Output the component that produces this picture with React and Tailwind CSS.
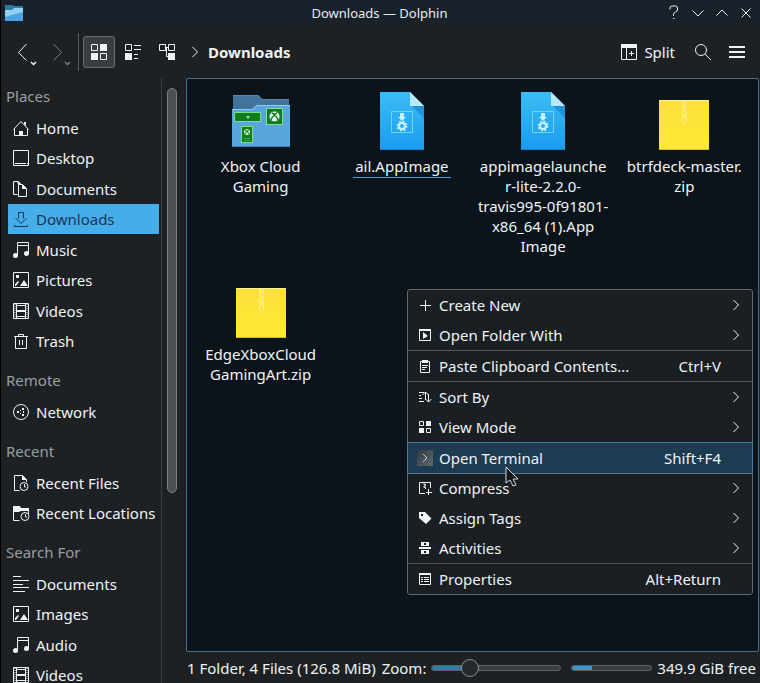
import React, { useState } from 'react';
import clsx from 'clsx';

// 16px glyphs, drawn with currentColor
const glyphs = {
  home: (
    <>
      <path d="M1.5 8.5v7h13v-7M.5 9.5L8 1.5l7.500 8" />
      <path d="M6 11h4v5H6zM11 2h2v4l-2-2z" fill="currentColor" stroke="none" />
    </>
  ),
  desktop: <path d="M.5.5h15v15H.5zM2 13.500h11M14 13.500h1" />,
  documents: (
    <>
      <path d="M4.500 13.500h-4V.5h5l2 2M5.500 3.500h4l4 4v8h-8z" />
      <path d="M9 3l5 5H9zM4 0l4 3H5z" fill="currentColor" stroke="none" />
    </>
  ),
  downloads: <path d="M5.500 7.500v-6h5v6M2.500 7L8 12.500 13.500 7M1.500 14v1.500h13V14" />,
  music: (
    <>
      <path d="M4.500 13V.5h11V11M5 3.500h10" />
      <circle cx="2.500" cy="13.500" r="2.500" fill="currentColor" stroke="none" />
      <circle cx="13.500" cy="11.500" r="2.500" fill="currentColor" stroke="none" />
    </>
  ),
  image: (
    <>
      <path d="M.5.5h15v15H.5z" />
      <path d="M3 3h3v3H3zM7 14l4-6 4 6zM2 14v-2l3-3 1 1-3 4z" fill="currentColor" stroke="none" />
    </>
  ),
  video: (
    <>
      <path d="M.5.5h15v15H.5zM3.500 0v16M12.500 0v16M4 2.500h8M4 13.500h8" />
      <path d="M4 7h8v2H4z" fill="currentColor" stroke="none" />
      <path d="M2 1v14M14 1v14" strokeDasharray="1 1" />
    </>
  ),
  trash: <path d="M1 3.500h14M2.500 3.500v12h11v-12M5.500 3V1.500h5V3M6.500 7v5M9.500 7v5" />,
  network: (
    <>
      <circle cx="8" cy="8" r="7.500" />
      <path d="M4 7h2v2H4zM9 4h2v2H9zM9 10h2v2H9zM7 6h1v1H7zM7 9h1v1H7zM10 7h1v2h-1z" fill="currentColor" stroke="none" />
    </>
  ),
  recentFile: (
    <>
      <path d="M6.500 15.500h-5V.5h8l4 4V7" />
      <path d="M9 0l5 5H9z" fill="currentColor" stroke="none" />
      <circle cx="11" cy="11.500" r="4" />
      <path d="M11.500 9v3H13" />
    </>
  ),
  recentFolder: (
    <>
      <path d="M.5 3v12.500h6M15.500 3v6" />
      <path d="M0 1h7l1 2h8v3H8L6 7H0z" fill="currentColor" stroke="none" />
      <circle cx="12" cy="11.500" r="4" />
      <path d="M12.500 9v3H14" />
    </>
  ),
  lines: <path d="M0 .5h8M0 4.500h16M0 8.500h10M0 11.500h16M0 15.500h12" />,
  grid: (
    <>
      <path d="M.5.5h6v6h-6zM9.500 9.500h6v6h-6z" />
      <path d="M9 0h7v7H9zM0 9h7v7H0z" fill="currentColor" stroke="none" />
    </>
  ),
  compact: (
    <>
      <path d="M.5.5h6v6h-6zM9 1.500h7M9 5.500h7M9 10.500h4M9 14.500h4" />
      <path d="M0 9h7v7H0z" fill="currentColor" stroke="none" />
    </>
  ),
  tree: (
    <>
      <path d="M.5.5h6v6h-6zM9.500.5h6v6h-6zM6.500 3.500h3M7.500 4v8.500H10" />
      <path d="M9 9h7v7H9z" fill="currentColor" stroke="none" />
    </>
  ),
  split: (
    <>
      <path d="M.5.5h15v15H.5zM5.500 3v12M8 9.500h5M10.500 7v5" />
      <path d="M0 0h16v4H0z" fill="currentColor" stroke="none" />
    </>
  ),
  search: (
    <>
      <circle cx="6" cy="6" r="5.500" />
      <path d="M10 10l6 6" />
    </>
  ),
  burger: <path d="M0 3h16M0 8h16M0 13h16" strokeWidth="2" />,
  help: <path d="M4 4.500V3a2 2 0 0 1 2-2h3.500a2 2 0 0 1 2 2v2c0 2-4 2-4 4.500v1.500M7 13.500h1.500" />,
  minimize: <path d="M2.500 5.500L8 11l5.500-5.500" />,
  maximize: <path d="M2.500 10.500L8 5l5.500 5.500" />,
  close: <path d="M3.500 3.500l9 9M12.500 3.500l-9 9" />,
  right: <path d="M5.500 3L10.500 8l-5 5" />,
  plus: <path d="M8.500 3v11M3 8.500h11" />,
  openWith: (
    <>
      <path d="M2.500 2.500h11v11h-11z" />
      <path d="M2 2h12v2H2zM6 5l5 4-5 3z" fill="currentColor" stroke="none" />
    </>
  ),
  paste: (
    <>
      <path d="M3.500 3.500h9v11h-9zM5 7.500h6M5 9.500h5M5 11.500h3" />
      <path d="M5 2h6v3H5z" fill="currentColor" stroke="none" />
    </>
  ),
  sort: <path d="M2 3.500h5M2 6.500h2M2 9.500h3M2 12.500h5M8.500 11V3M5.500 6l3-3 3 3M11.500 5v8M8.500 10l3 3 3-3" />,
  viewMode: (
    <>
      <path d="M2.500 2.500h4v4h-4zM9.500 9.500h4v4h-4z" />
      <path d="M9 2h5v5H9zM2 9h5v5H2z" fill="currentColor" stroke="none" />
    </>
  ),
  compress: <path d="M8 13.500H2.500v-11h11V8M7 3v1.500h1.500V6H7v1.500h1.500V9M11.500 9v6M9 12.500h6" />,
  tag: (
    <path
      fillRule="evenodd"
      d="M2 2h6l6.500 6.500L9 14 2 8zM4 4v2h2V4z"
      fill="currentColor"
      stroke="none"
    />
  ),
  activities: (
    <path
      fillRule="evenodd"
      d="M4 2h8v4H4zM7 3v2h2V3zM2 7h12v2H2zM4 10h8v4H4zM7 11v2h2v-2z"
      fill="currentColor"
      stroke="none"
    />
  ),
  properties: (
    <>
      <path d="M2.500 2.500h11v11h-11zM4 6.500h2M4 8.500h2M4 10.500h2M7 6.500h5M7 8.500h5M7 10.500h5" />
      <path d="M2 2h12v2H2z" fill="currentColor" stroke="none" />
    </>
  ),
};

const Glyph = ({ name, className = 'size-4' }) => (
  <svg
    viewBox="0 0 16 16"
    fill="none"
    stroke="currentColor"
    className={clsx('shrink-0 overflow-visible', className)}
    aria-hidden="true"
  >
    {glyphs[name]}
  </svg>
);

const TerminalIcon = () => (
  <svg viewBox="0 0 16 16" className="size-4 shrink-0" aria-hidden="true">
    <defs>
      <linearGradient id="term" x1="0" y1="0" x2="1" y2="1">
        <stop offset="0" stopColor="#2d3a41" />
        <stop offset="1" stopColor="#5f6a6c" />
      </linearGradient>
    </defs>
    <path d="M0 0h16v16H0z" fill="url(#term)" />
    <path d="M6 4l4 4-4 4" fill="none" stroke="#c4ccd0" />
  </svg>
);

const FolderIcon = () => (
  <svg viewBox="0 0 64 64" className="size-16" aria-hidden="true">
    <path d="M4 6h25l4 4h27v20H4z" fill="#41749b" />
    <path d="M4 6h25l4 4h27v1H33l-4-4H4z" fill="#5689ad" />
    <path d="M3 20h20l5-4h33v42H3z" fill="#5aa5dc" />
    <path d="M3 20h20l5-4h33v1H28l-5 4H3z" fill="#8fcaf2" />
    <path d="M3 57h58v1H3z" fill="#3b7fb4" />
    <g fill="#0f7c1d" stroke="#7fe08d">
      <path d="M5.500 23.500h26v9h-26zM37.500 19.500h16v16h-16zM12.500 37.500h11v16h-11z" />
    </g>
    <path d="M17 27h4l-2 3z" fill="#8ef09a" />
    <circle cx="45.500" cy="27.500" r="5" fill="#e9f8ea" />
    <path d="M42 31c1-3 2-4 3.500-5 1.500 1 2.500 2 3.500 5M43 24l2.500 1.500L48 24" fill="none" stroke="#0f7c1d" strokeWidth="1.500" />
    <circle cx="18" cy="43" r="3" fill="#d5f2d8" />
    <path d="M16 45l2-3 2 3M16 41l2 1 2-1" fill="none" stroke="#0f7c1d" />
    <path d="M15 49.500h6M15 51.500h6" stroke="#3fa64c" />
  </svg>
);

const AppImageIcon = () => (
  <svg viewBox="0 0 64 64" className="size-16" aria-hidden="true">
    <defs>
      <linearGradient id="appimage" x1="0" y1="0" x2="0" y2="1">
        <stop offset="0" stopColor="#3cbcf6" />
        <stop offset="1" stopColor="#1a9cf0" />
      </linearGradient>
    </defs>
    <path d="M10 3h30l14 14v44H10z" fill="url(#appimage)" />
    <path d="M42 17h12v12z" fill="#2293d8" />
    <path d="M40 3l14 14H40z" fill="#b6ebfb" />
    <path d="M10 60h44v1H10z" fill="#1583cb" />
    <path d="M21.500 22.500h21v21h-21z" fill="none" stroke="#6bd8f6" />
    <path d="M30 24h4v4h2l-4 4-4-4h2z" fill="#c7f4fc" />
    <circle cx="32" cy="37" r="3" fill="none" stroke="#c7f4fc" strokeWidth="2" />
    <circle cx="32" cy="37" r="4.500" fill="none" stroke="#c7f4fc" strokeWidth="2" strokeDasharray="1.800 1.734" />
  </svg>
);

const ZipIcon = () => (
  <svg viewBox="0 0 64 64" className="size-16" aria-hidden="true">
    <defs>
      <linearGradient id="zip" x1="0" y1="0" x2="0" y2="1">
        <stop offset="0" stopColor="#fde03a" />
        <stop offset="1" stopColor="#ffe934" />
      </linearGradient>
    </defs>
    <path d="M7 11h50v50H7z" fill="url(#zip)" />
    <path d="M7 11h50v1H7z" fill="#fff0a0" />
    <path d="M7 60h50v1H7z" fill="#d9b92a" />
    <path d="M31 12v18M33.500 13v18" stroke="#fff3a0" strokeWidth="2" strokeDasharray="1 1" />
    <path d="M30.500 26.500h4v6l-2 3-2-3z" fill="none" stroke="#fff08a" />
  </svg>
);

const fileIcons = { folder: FolderIcon, appimage: AppImageIcon, zip: ZipIcon };

const places = [
  {
    title: 'Places',
    items: [
      ['Home', 'home'],
      ['Desktop', 'desktop'],
      ['Documents', 'documents'],
      ['Downloads', 'downloads'],
      ['Music', 'music'],
      ['Pictures', 'image'],
      ['Videos', 'video'],
      ['Trash', 'trash'],
    ],
  },
  { title: 'Remote', items: [['Network', 'network']] },
  {
    title: 'Recent',
    items: [
      ['Recent Files', 'recentFile'],
      ['Recent Locations', 'recentFolder'],
    ],
  },
  {
    title: 'Search For',
    items: [
      ['Documents', 'lines'],
      ['Images', 'image'],
      ['Audio', 'music'],
      ['Videos', 'video'],
    ],
  },
];

const files = [
  { type: 'folder', lines: ['Xbox Cloud', 'Gaming'] },
  { type: 'appimage', lines: ['ail.AppImage'], focused: true },
  {
    type: 'appimage',
    lines: ['appimagelaunche', 'r-lite-2.2.0-', 'travis995-0f91801-', 'x86_64 (1).App', 'Image'],
  },
  { type: 'zip', lines: ['btrfdeck-master.', 'zip'] },
  { type: 'zip', lines: ['EdgeXboxCloud', 'GamingArt.zip'] },
];

const menuGroups = [
  [
    { label: 'Create New', icon: 'plus', submenu: true },
    { label: 'Open Folder With', icon: 'openWith', submenu: true },
  ],
  [{ label: 'Paste Clipboard Contents...', icon: 'paste', shortcut: 'Ctrl+V' }],
  [
    { label: 'Sort By', icon: 'sort', submenu: true },
    { label: 'View Mode', icon: 'viewMode', submenu: true },
  ],
  [
    { label: 'Open Terminal', icon: 'terminal', shortcut: 'Shift+F4', active: true },
    { label: 'Compress', icon: 'compress', submenu: true },
    { label: 'Assign Tags', icon: 'tag', submenu: true },
    { label: 'Activities', icon: 'activities', submenu: true },
  ],
  [{ label: 'Properties', icon: 'properties', shortcut: 'Alt+Return' }],
];

const TitleBar = () => (
  <header className="grid h-[25px] shrink-0 grid-cols-[1fr_auto_1fr] items-center bg-[#19212a] pl-1 pr-[6px]">
    <svg viewBox="0 0 18 16" className="h-4 w-[18px]" aria-hidden="true">
      <path d="M0 0h7l2 1h9v8H0z" fill="#2d7e9c" />
      <path d="M0 5h7l2-2h9v13H0z" fill="#4ba3e0" />
      <path d="M0 5h7l2-2h9v4L0 12z" fill="#8fd0f4" />
    </svg>
    <h1 className="text-[13px] leading-5 text-[#e6ebef]">Downloads — Dolphin</h1>
    <div className="flex justify-end gap-2">
      {['help', 'minimize', 'maximize', 'close'].map((name) => (
        <button key={name} aria-label={name}>
          <Glyph name={name} />
        </button>
      ))}
    </div>
  </header>
);

const HistoryButton = ({ label, d, className }) => (
  <button aria-label={label} className={clsx('h-8 w-[34px]', className)}>
    <svg viewBox="0 0 34 32" fill="none" stroke="currentColor" className="h-8 w-[34px]">
      <path d={d} />
      <path d="M26 26l2.500 2.500L31 26" strokeWidth="1.500" />
    </svg>
  </button>
);

const Toolbar = () => (
  <nav className="flex h-[53px] shrink-0 items-center pl-1 pr-[15px]">
    <HistoryButton label="Back" d="M21.500 8l-8 8.500 8 8" />
    <HistoryButton label="Forward" d="M14.500 8l8 8.500-8 8" className="text-[#777b7e]" />
    <div className="ml-[5px] h-[38px] w-px bg-[#54585c]" />
    <button
      aria-label="Icons"
      aria-pressed="true"
      className="ml-1 flex size-8 items-center justify-center rounded-[3px] border border-[#6b6e71] bg-[#393c40]"
    >
      <Glyph name="grid" />
    </button>
    <button aria-label="Compact" className="ml-[10px]">
      <Glyph name="compact" />
    </button>
    <button aria-label="Details" className="ml-[18px]">
      <Glyph name="tree" />
    </button>
    <Glyph name="right" className="ml-3 size-4" />
    <a href="#downloads" className="ml-[5px] font-bold">
      Downloads
    </a>
    <button className="ml-auto flex items-center gap-[7px]">
      <Glyph name="split" /> Split
    </button>
    <button aria-label="Search" className="ml-5">
      <Glyph name="search" />
    </button>
    <button aria-label="Menu" className="ml-[18px]">
      <Glyph name="burger" />
    </button>
  </nav>
);

const Sidebar = () => (
  <aside className="flex w-[185px] shrink-0 overflow-hidden">
    <div className="flex-1 overflow-hidden border-r border-[#3b3f43] pl-[5px] pt-2">
      {places.map(({ title, items }) => (
        <section key={title} className="mb-[14px]">
          <h2 className="mb-[7px] text-[#9a9ea1]">{title}</h2>
          <ul className="px-[2px]">
            {items.map(([label, icon]) => (
              <li key={label} className="odd:last:mb-px even:mb-px">
                <a
                  href={`#${label.toLowerCase()}`}
                  className={clsx(
                    'flex h-[30px] items-center gap-[7px] whitespace-nowrap pl-[5px]',
                    label === 'Downloads' && 'bg-[#47ade9] text-[#12365a]'
                  )}
                >
                  <Glyph name={icon} />
                  {label}
                </a>
              </li>
            ))}
          </ul>
        </section>
      ))}
    </div>
    <div className="w-6 pl-[5px] pt-[10px]">
      <div className="h-[68%] w-[10px] rounded-full border border-[#7d8083] bg-[#4b4e52]" />
    </div>
  </aside>
);

const ContextMenu = () => (
  <div
    role="menu"
    className="absolute right-[5px] top-[210px] w-[346px] rounded-[3px] border border-[#62696e] bg-[#191f22]"
  >
    {menuGroups.map((group, i) => (
      <div key={i} className={clsx(i > 0 && 'border-t border-[#50575b]')}>
        {group.map(({ label, icon, shortcut, submenu, active }) => (
          <button
            key={label}
            role="menuitem"
            className={clsx(
              'flex h-[30px] w-full items-center pl-[9px] text-left',
              submenu ? 'pr-2' : 'pr-[31px]',
              active && 'bg-[#1d3b51] shadow-[0_0_0_1px_#4b7c98]'
            )}
          >
            {icon === 'terminal' ? <TerminalIcon /> : <Glyph name={icon} />}
            <span className="ml-[6px] flex-1">{label}</span>
            {shortcut && <span>{shortcut}</span>}
            {submenu && <Glyph name="right" />}
          </button>
        ))}
      </div>
    ))}
    {/* mouse pointer */}
    <svg viewBox="0 0 14 21" className="absolute left-[97px] top-[176px] h-[21px] w-[14px]" aria-hidden="true">
      <path d="M1 1v16l4-3 3 6 3-1-3-6h5z" fill="#14181b" stroke="#d5dadd" />
    </svg>
  </div>
);

const FileView = () => (
  <main className="relative flex-1 rounded-[2px] border border-[#456f89] bg-[#0b141a] px-[3px] pt-[10px]">
    <ul className="grid grid-cols-4 gap-y-[21px]">
      {files.map(({ type, lines, focused }) => {
        const FileIcon = fileIcons[type];
        return (
          <li key={lines[0]} className="flex flex-col items-center text-center">
            <FileIcon />
            <div className={clsx('mt-[3px] whitespace-nowrap', focused && 'border-b border-[#4f9ccb] px-[2px] pb-px')}>
              {lines.map((line) => (
                <span key={line} className="block">
                  {line}
                </span>
              ))}
            </div>
          </li>
        );
      })}
    </ul>
    <ContextMenu />
  </main>
);

const StatusBar = () => {
  const [zoom, setZoom] = useState(26);
  return (
    <footer className="flex h-[31px] shrink-0 items-center whitespace-nowrap pl-px pr-[3px] pt-px">
      <span>1 Folder, 4 Files (126.8 MiB)</span>
      <label htmlFor="zoom" className="ml-[6px]">
        Zoom:
      </label>
      <input
        id="zoom"
        type="range"
        value={zoom}
        onChange={(e) => setZoom(Number(e.target.value))}
        style={{
          backgroundImage: `linear-gradient(to right, #347ca8 ${zoom}%, #3a3e42 ${zoom}%)`,
        }}
        className="mx-[5px] h-[6px] min-w-0 flex-[131] appearance-none rounded-full border border-[#5c6165] [&::-webkit-slider-thumb]:size-[18px] [&::-webkit-slider-thumb]:appearance-none [&::-webkit-slider-thumb]:rounded-full [&::-webkit-slider-thumb]:border [&::-webkit-slider-thumb]:border-[#8b8f92] [&::-webkit-slider-thumb]:bg-[#25292d]"
      />
      <div className="mx-[5px] h-[6px] flex-[81] overflow-hidden rounded-full border border-[#5c6165] bg-[#3a3e42]">
        <div className="h-full w-1/4 bg-[#3f93c6]" />
      </div>
      <span>349.9 GiB free</span>
    </footer>
  );
};

export default function App() {
  return (
    <div className="flex h-screen flex-col overflow-hidden border-l border-black bg-[#1d2124] font-['Noto_Sans',sans-serif] text-[15px] leading-5 text-[#f0f3f5]">
      <TitleBar />
      <Toolbar />
      <div className="flex min-h-0 flex-1">
        <Sidebar />
        <div className="flex min-w-0 flex-1 flex-col pr-px">
          <FileView />
          <StatusBar />
        </div>
      </div>
    </div>
  );
}
